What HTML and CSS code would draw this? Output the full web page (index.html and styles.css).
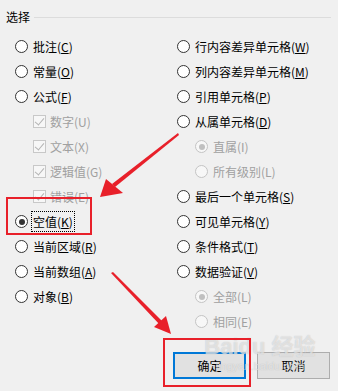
FILE: index.html
```html
<!DOCTYPE html>
<html lang="zh-CN">
  <head>
    <meta charset="utf-8" />
    <title>定位条件</title>
    <link rel="stylesheet" href="styles.css">
  </head>

  <body>
    <div class="dialog">
      <div class="group-title">
        <span>选择</span>
        <div class="rule"></div>
      </div>

      <div class="columns">
        <div class="col col-left">
          <div class="row"><i class="radio"></i>批注(<u>C</u>)</div>
          <div class="row"><i class="radio"></i>常量(<u>O</u>)</div>
          <div class="row"><i class="radio"></i>公式(<u>F</u>)</div>
          <div class="row sub off"><i class="check"></i>数字(U)</div>
          <div class="row sub off"><i class="check"></i>文本(X)</div>
          <div class="row sub off"><i class="check"></i>逻辑值(G)</div>
          <div class="row sub off"><i class="check"></i>错误(E)</div>
          <div class="row"><i class="radio on"></i><span class="focus">空值(<u>K</u>)</span></div>
          <div class="row"><i class="radio"></i>当前区域(<u>R</u>)</div>
          <div class="row"><i class="radio"></i>当前数组(<u>A</u>)</div>
          <div class="row"><i class="radio"></i>对象(<u>B</u>)</div>
        </div>

        <div class="col col-right">
          <div class="row"><i class="radio"></i>行内容差异单元格(<u>W</u>)</div>
          <div class="row"><i class="radio"></i>列内容差异单元格(<u>M</u>)</div>
          <div class="row"><i class="radio"></i>引用单元格(<u>P</u>)</div>
          <div class="row"><i class="radio"></i>从属单元格(<u>D</u>)</div>
          <div class="row sub off"><i class="radio on"></i>直属(I)</div>
          <div class="row sub off"><i class="radio"></i>所有级别(L)</div>
          <div class="row"><i class="radio"></i>最后一个单元格(<u>S</u>)</div>
          <div class="row"><i class="radio"></i>可见单元格(<u>Y</u>)</div>
          <div class="row"><i class="radio"></i>条件格式(<u>T</u>)</div>
          <div class="row"><i class="radio"></i>数据验证(<u>V</u>)</div>
          <div class="row sub off"><i class="radio on"></i>全部(L)</div>
          <div class="row sub off"><i class="radio"></i>相同(E)</div>
        </div>
      </div>

      <div class="buttons">
        <button class="btn btn-default">确定</button>
        <button class="btn">取消</button>
      </div>
    </div>

    <div class="watermark">
      <span class="wm-logo">Bai<b>du</b> 经验</span>
      <span class="wm-url">jingyan.baidu.com</span>
    </div>

    <!-- red marks drawn over the screenshot -->
    <svg class="marks" width="338" height="391" viewBox="0 0 338 391">
      <rect x="7" y="198" width="84" height="36" fill="none" stroke="#e8202a" stroke-width="2" />
      <rect x="164" y="339" width="86" height="47" fill="none" stroke="#e8202a" stroke-width="2" />
      <polygon points="178,133 179,135 115,187 112,184" fill="#e8202a" />
      <polygon points="100,197 106,179 123,193" fill="#e8202a" />
      <polygon points="111,273 113,272 163,322 160,325" fill="#e8202a" />
      <polygon points="171,334 154,327 166,316" fill="#e8202a" />
    </svg>
  </body>
</html>
```

FILE: styles.css
```css
body {
  margin: 0;
  background-color: #f0f0f0;
  color: #000;
  font-family: "Noto Sans CJK SC", "Microsoft YaHei", sans-serif;
  font-size: 12px;
}

.dialog {
  width: 338px;
  height: 391px;
  position: relative;
}

.group-title {
  display: flex;
  align-items: center;
  padding: 8px 7px 0 6px;
  height: 18px;
  line-height: 18px;
}

.group-title span {
  padding-right: 4px;
}

.rule {
  flex: 1;
  height: 1px;
  background-color: #dcdcdc;
}

.columns {
  display: flex;
  padding-top: 8px;
}

.col-left {
  width: 162px;
  padding-left: 15px;
}

.col-right {
  padding-left: 0;
}

.row {
  display: flex;
  align-items: center;
  height: 25px;
  white-space: nowrap;
}

.row u {
  text-decoration: underline;
  text-underline-offset: 1px;
}

.row.sub {
  padding-left: 18px;
}

.row.off {
  color: #a0a0a0;
}

.radio {
  display: inline-block;
  box-sizing: border-box;
  width: 13px;
  height: 13px;
  margin-right: 5px;
  border: 1px solid #333;
  border-radius: 50%;
  background-color: #fff;
  position: relative;
  flex-shrink: 0;
}

.radio.on::after {
  content: "";
  position: absolute;
  left: 2.5px;
  top: 2.5px;
  width: 6px;
  height: 6px;
  border-radius: 50%;
  background-color: #333;
}

.off .radio {
  border-color: #c4c4c4;
  background-color: #f7f7f7;
}

.off .radio.on::after {
  background-color: #c0c0c0;
}

.check {
  display: inline-block;
  box-sizing: border-box;
  width: 13px;
  height: 13px;
  margin-right: 4px;
  border: 1px solid #c8c8c8;
  background-color: #f7f7f7;
  position: relative;
  flex-shrink: 0;
}

.check::after {
  content: "";
  position: absolute;
  left: 3px;
  top: 0px;
  width: 4px;
  height: 8px;
  border-right: 1px solid #b4b4b4;
  border-bottom: 1px solid #b4b4b4;
  transform: rotate(40deg);
}

.focus {
  outline: 1px dotted #000;
  padding: 1px 1px 1px 1px;
  margin-left: -1px;
}

.buttons {
  position: absolute;
  left: 173px;
  top: 352px;
  display: flex;
  gap: 11px;
}

.btn {
  box-sizing: border-box;
  width: 73px;
  height: 27px;
  font-family: "Noto Sans CJK SC", "Microsoft YaHei", sans-serif;
  font-size: 12px;
  color: #000;
  background-color: #e1e1e1;
  border: 1px solid #adadad;
  padding: 0;
}

.btn-default {
  border: 2px solid #0078d7;
}

.watermark {
  position: absolute;
  left: 200px;
  top: 334px;
  width: 120px;
  display: flex;
  flex-direction: column;
  align-items: center;
  pointer-events: none;
  font-family: "Liberation Sans", "Noto Sans CJK SC", sans-serif;
  color: rgba(255, 255, 255, 0.55);
  text-shadow: 0 0 1px rgba(150, 150, 150, 0.6);
}

.wm-logo {
  font-size: 22px;
  font-weight: bold;
  line-height: 26px;
}

.wm-logo b {
  font-weight: bold;
}

.wm-url {
  font-size: 11px;
  line-height: 12px;
}

.marks {
  position: absolute;
  left: 0;
  top: 0;
  pointer-events: none;
}
```
